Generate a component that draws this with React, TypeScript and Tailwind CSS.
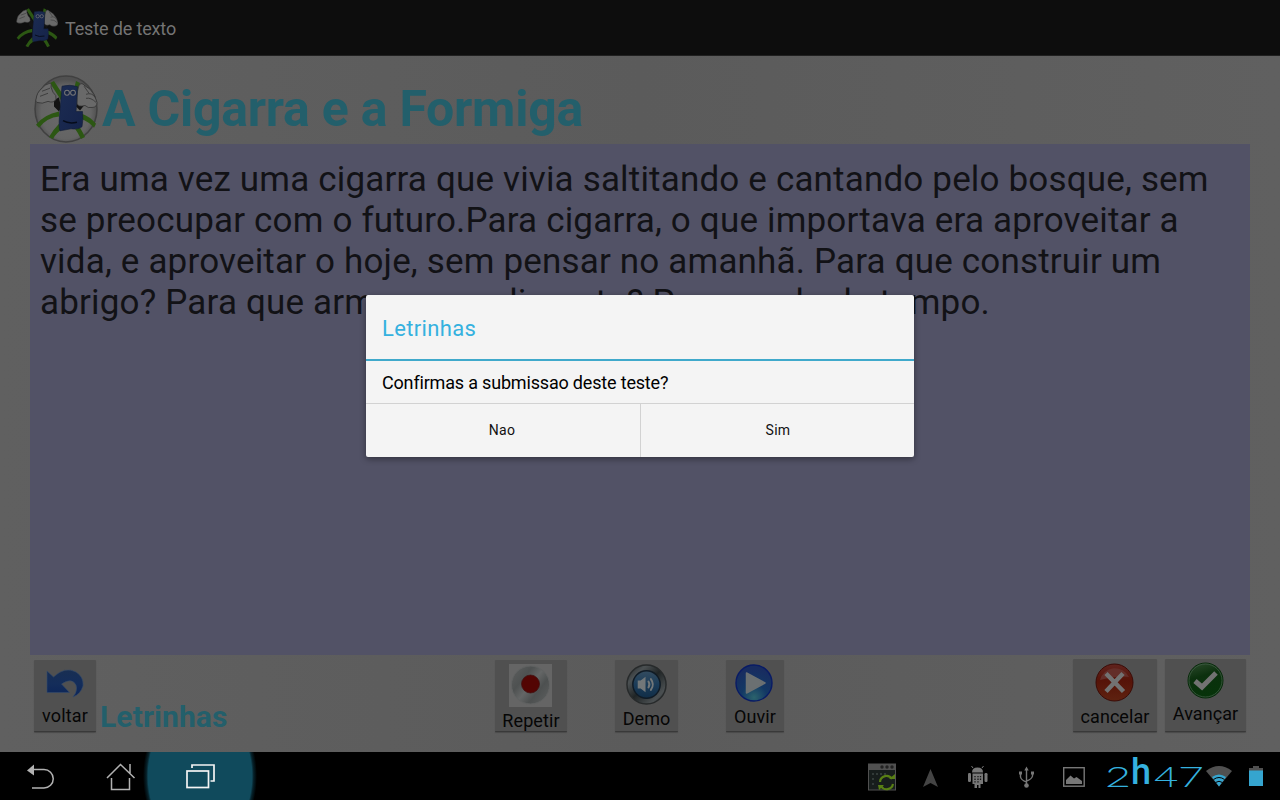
import React from "react";

const lines = [
  "Era uma vez uma cigarra que vivia saltitando e cantando pelo bosque, sem",
  "se preocupar com o futuro.Para cigarra, o que importava era aproveitar a",
  "vida, e aproveitar o hoje, sem pensar no amanhã. Para que construir um",
  "abrigo? Para que armazenar alimento? Pura perda de tempo.",
];

function Mascot({ className, disc }: { className: string; disc?: boolean }) {
  return (
    <svg viewBox={disc ? "0 0 64 67" : "1 4 62 60"} className={className} preserveAspectRatio="none">
      <defs>
        <radialGradient id="disc" cx="50%" cy="55%" r="50%">
          <stop offset="0" stopColor="#6a6a6a" />
          <stop offset="0.8" stopColor="#646464" />
          <stop offset="1" stopColor="#505050" />
        </radialGradient>
        <linearGradient id="body" x1="0" y1="0" x2="1" y2="1">
          <stop offset="0" stopColor="#1c2c52" />
          <stop offset="1" stopColor="#15234a" />
        </linearGradient>
      </defs>
      {disc && <ellipse cx="32" cy="33.5" rx="31" ry="32.5" fill="url(#disc)" stroke="#404040" strokeWidth="1.5" />}
      <g fill="#2c5713">
        <path d="M16 8 L20 6 L30 21 L27 25 Z" />
        <path d="M42 6 L46 8 L42 24 L38 22 Z" />
        <path d="M25 36 Q10 39 2 49 L5 52 Q13 42 25 41 Z" />
        <path d="M25 48 Q19 54 15 61 L19 63 Q22 57 29 53 Z" />
        <path d="M47 38 Q56 41 62 48 L60 52 Q55 46 47 43 Z" />
        <path d="M41 53 L46 52 Q49 57 51 61 L47 63 Q44 57 41 53 Z" />
      </g>
      <path d="M20 25 L25 22 L27 32 L25 36 L20 31 Z M42 31 L44 23 L50 30 L46 35 Z" fill="#131313" />
      <g fill="#696969" stroke="#333" strokeWidth="0.8">
        <path d="M2 24 Q3 17 7 14 Q11 9 16 8 Q18 9 17 12 L19 17 Q23 20 22 24 Q20 28 14 26 Q8 29 3 27 Q1 26 2 24 Z" />
        <path d="M43 22 Q43 16 45 10 Q48 7 50 10 L56 14 Q61 19 63 27 Q63 32 58 32 Q54 33 51 30 Q44 32 43 28 Z" />
        <path d="M6 21 L14 18 M8 16 L16 13 M50 11 L55 18 M52 19 Q58 17 61 22 M52 23 Q57 22 62 27" fill="none" />
      </g>
      <path d="M28 11 Q36 9 43.500 11.500 L42.500 30 L42 36 L48.500 36 Q49.500 44 48 51 Q44 54 37 53 L26 55 Q24.500 52 25.500 40 Z" fill="url(#body)" stroke="#111c36" strokeWidth="0.6" />
      <g fill="#172545" stroke="#777" strokeWidth="1">
        <circle cx="33" cy="17.500" r="2.400" />
        <circle cx="39" cy="17.500" r="2.400" />
      </g>
      <path d="M29 45 Q35 48.500 43 46.500" fill="none" stroke="#060c1a" strokeWidth="1.400" />
    </svg>
  );
}

function ActionButton({ className, label, labelClass, children }: { className: string; label: string; labelClass: string; children: React.ReactNode }) {
  return (
    <button className={`flex shrink-0 flex-col items-center overflow-hidden rounded-[1px] border-b border-[#393939] bg-[#505050] shadow-[0_1px_1px_#4a4a4a] ${className}`}>
      {children}
      <span className={`block whitespace-nowrap text-[18px] leading-[21px] text-[#060606] ${labelClass}`}>{label}</span>
    </button>
  );
}

export default function App() {
  return (
    <div className="relative flex h-[800px] w-[1280px] flex-col overflow-hidden bg-[#5d5d5d] font-[Roboto,sans-serif]">
      <header className="flex h-14 shrink-0 items-center border-b border-[#202020] bg-[#0d0d0d] pl-4 shadow-[0_1px_2px_#3c3c3c]">
        <Mascot className="h-[41px] w-[42px]" />
        <span className="ml-[7px] mt-[2px] whitespace-nowrap text-[18px] leading-6 tracking-[-0.15px] text-[#747474]">Teste de texto</span>
      </header>

      <main className="flex h-[696px] flex-col bg-gradient-to-r from-[#606060] via-[#5b5b5b] to-[#606060] px-[30px]">
        <div className="flex h-[88px] shrink-0 items-start pl-1 pt-[19px]">
          <Mascot className="h-[68px] w-[64px] shrink-0" disc />
          <h1 className="ml-[4px] mt-[5px] whitespace-nowrap text-[50px] font-bold leading-[59px] tracking-[-0.25px] text-[#235f6b]">A Cigarra e a Formiga</h1>
        </div>
        <section className="h-[511px] shrink-0 bg-[#525266] px-[10px] pt-[15px] text-[35px] leading-[41px] tracking-[0.17px] text-[#121216]">
          {lines.map((text) => (
            <p key={text} className="whitespace-nowrap">{text}</p>
          ))}
        </section>
        <div className="flex items-start pl-1 pt-[5px]">
          <ActionButton className="h-[72px] w-[62px]" label="voltar" labelClass="mt-[6px] tracking-[0.2px]">
            <svg viewBox="0 0 38 30" className="mr-px mt-[9px] h-[30px] w-[38px] shrink-0">
              <defs>
                <linearGradient id="undo" x1="0" y1="0" x2="0" y2="1">
                  <stop offset="0" stopColor="#182e52" />
                  <stop offset="0.5" stopColor="#142d5a" />
                  <stop offset="1" stopColor="#0c2458" />
                </linearGradient>
              </defs>
              <path d="M1 2 L7.500 8 Q19 -3 30 3 Q38 8 37 17 Q34.500 25 27 28 Q32 22 30 16 Q26 8 15.500 15 L23.500 23.500 L1 23.500 Z" fill="url(#undo)" stroke="#33496b" strokeWidth="0.600" />
            </svg>
          </ActionButton>
          <span className="ml-1 mt-[39px] w-[395px] whitespace-nowrap text-[30px] font-bold leading-[36px] tracking-[0.1px] text-[#235f6b]">Letrinhas</span>
          <ActionButton className="h-[72px] w-[72px]" label="Repetir" labelClass="mt-[3px] tracking-[0.1px]">
            <svg viewBox="0 0 43 43" className="mr-px mt-1 h-[43px] w-[43px] shrink-0">
              <defs>
                <linearGradient id="rec" x1="0" y1="0.1" x2="1" y2="0.9">
                  <stop offset="0" stopColor="#5b5d5d" />
                  <stop offset="0.3" stopColor="#4e5151" />
                  <stop offset="0.5" stopColor="#646666" />
                  <stop offset="0.7" stopColor="#4d5050" />
                  <stop offset="1" stopColor="#5c5e5e" />
                </linearGradient>
              </defs>
              <rect width="43" height="43" fill="#656565" />
              <circle cx="21.5" cy="21" r="19" fill="url(#rec)" stroke="#606262" />
              <circle cx="21.5" cy="20" r="9" fill="#530503" stroke="#3f1010" strokeWidth="0.7" />
            </svg>
          </ActionButton>
          <ActionButton className="ml-12 h-[72px] w-[63px]" label="Demo" labelClass="mt-[3px] tracking-[0px]">
            <svg viewBox="0 0 42 42" className="mt-1 h-[41px] w-[41px] shrink-0">
              <defs>
                <linearGradient id="ring" x1="0" y1="0" x2="1" y2="1">
                  <stop offset="0" stopColor="#1e2223" />
                  <stop offset="0.25" stopColor="#4b5052" />
                  <stop offset="0.5" stopColor="#202526" />
                  <stop offset="0.8" stopColor="#4b5052" />
                  <stop offset="1" stopColor="#24292b" />
                </linearGradient>
                <linearGradient id="spk" x1="0" y1="0" x2="0" y2="1">
                  <stop offset="0" stopColor="#344c5f" />
                  <stop offset="0.5" stopColor="#1b3c59" />
                  <stop offset="1" stopColor="#102d46" />
                </linearGradient>
              </defs>
              <circle cx="21" cy="21" r="20" fill="url(#ring)" stroke="#272a2b" strokeWidth="1.5" />
              <circle cx="21" cy="21" r="14" fill="url(#spk)" stroke="#101b25" strokeWidth="1.5" />
              <path d="M12 17 H15 L20 13 V29 L15 25 H12 Z" fill="#727779" />
              <path d="M23 18 Q25 21 23 24 M25.5 15.5 Q29.5 21 25.5 26.5" fill="none" stroke="#727779" strokeWidth="2" strokeLinecap="round" />
            </svg>
          </ActionButton>
          <ActionButton className="ml-12 h-[72px] w-[58px]" label="Ouvir" labelClass="mt-[4px] tracking-[0.1px]">
            <svg viewBox="0 0 38 38" className="mr-[2px] mt-1 h-[38px] w-[38px] shrink-0">
              <defs>
                <radialGradient id="play" cx="50%" cy="90%" r="80%">
                  <stop offset="0" stopColor="#2b636c" />
                  <stop offset="0.45" stopColor="#133864" />
                  <stop offset="1" stopColor="#182c60" />
                </radialGradient>
              </defs>
              <circle cx="19" cy="19" r="18" fill="url(#play)" stroke="#091b65" strokeWidth="1.4" />
              <path d="M11.5 9 L30 19 L11.5 29 Z" fill="#6b7072" stroke="#6b7072" strokeWidth="1.5" strokeLinejoin="round" />
            </svg>
          </ActionButton>
          <ActionButton className="-mt-px ml-[289px] h-[73px] w-[84px]" label="cancelar" labelClass="mt-[4px] tracking-[0.05px]">
            <svg viewBox="0 0 39 39" className="mr-px mt-1 h-[39px] w-[39px] shrink-0">
              <defs>
                <linearGradient id="no" x1="0" y1="0" x2="0" y2="1">
                  <stop offset="0" stopColor="#60231e" />
                  <stop offset="0.45" stopColor="#561308" />
                  <stop offset="1" stopColor="#5e2210" />
                </linearGradient>
              </defs>
              <circle cx="19.5" cy="19.5" r="18.5" fill="url(#no)" stroke="#3b0b06" />
              <path d="M5 17 A15.5 15.5 0 0 1 34 14 Q24 12 5 17 Z" fill="#632e29" />
              <path d="M11 10.500 L28.500 28.500 M28 10.500 L11 28.500" stroke="#727272" strokeWidth="4.500" />
            </svg>
          </ActionButton>
          <ActionButton className="-mt-px ml-2 h-[73px] w-[81px]" label="Avançar" labelClass="mt-[4px] tracking-[0.05px]">
            <svg viewBox="0 0 37 37" className="mt-[3px] h-[37px] w-[37px] shrink-0">
              <defs>
                <linearGradient id="yes" x1="0" y1="0" x2="0.3" y2="1">
                  <stop offset="0" stopColor="#2e4c2e" />
                  <stop offset="0.45" stopColor="#0c300e" />
                  <stop offset="1" stopColor="#07330a" />
                </linearGradient>
              </defs>
              <circle cx="18.500" cy="18.500" r="17.500" fill="url(#yes)" stroke="#072a0a" />
              <circle cx="18.500" cy="18.500" r="16.500" fill="none" stroke="#45604a" strokeWidth="0.700" />
              <path d="M8 19 L15 25 L29 11" fill="none" stroke="#727272" strokeWidth="5" />
            </svg>
          </ActionButton>
        </div>
      </main>

      <nav className="flex h-12 shrink-0 items-center overflow-hidden bg-black">
        <svg viewBox="0 0 260 48" className="h-12 w-[260px] shrink-0" fill="none">
          <defs>
            <radialGradient id="glow" cx="50%" cy="50%" r="50%">
              <stop offset="0.91" stopColor="#104a5c" />
              <stop offset="0.94" stopColor="#06222b" />
              <stop offset="1" stopColor="#000" />
            </radialGradient>
          </defs>
          <ellipse cx="200" cy="24" rx="57" ry="78" fill="url(#glow)" />
          <g stroke="#b2b2b2" strokeWidth="1.500">
            <path d="M32 17.500 H44 A9.200 9.200 0 0 1 44 36 H32" />
            <path d="M27 18.500 L34 12.500 V23.500 Z" fill="#b2b2b2" stroke="none" />
            <path d="M107 26 L120.500 12.500 L134.500 26 M130 21 V12 M111.500 26 V37.500 H129.500 V26" />
          </g>
          <g stroke="#f4f4f4" strokeWidth="1.700">
            <rect x="187" y="19" width="21.500" height="16.500" />
            <path d="M192 16 V13 H214 V29 H210.500" />
          </g>
        </svg>
        <svg viewBox="0 0 240 48" className="ml-[600px] h-12 w-[240px] shrink-0" fill="none">
          <g transform="translate(-860 -752)">
            <rect x="868.500" y="764" width="27" height="26" fill="#171d1c" stroke="#505050" strokeWidth="1" />
            <rect x="868" y="764" width="28" height="6" fill="#505050" />
            <g fill="#222"><circle cx="882" cy="767" r="1.700" /><circle cx="887" cy="767" r="1.700" /><circle cx="892" cy="767" r="1.700" /></g>
            <g stroke="#3c4442" strokeWidth="1.500"><path d="M872 774 h2 M872 779 h2 M872 784 h2 M876 774 h10" strokeDasharray="2 2" /></g>
            <g stroke="#587f14" strokeWidth="2.200"><path d="M880 782 A6.500 6.500 0 0 1 892 779 M893 784 A6.500 6.500 0 0 1 881 786" /></g>
            <path d="M889 779 h6 v-5 Z M878 785 h6 l-5 5 Z" fill="#587f14" />
            <path d="M930.500 769 L938 787 L930.500 783 L923 787 Z" fill="#444" />
            <g fill="#777">
              <path d="M972 772.500 Q972 767.500 977.500 767.500 Q983 767.500 983 772.500 Z" />
              <path d="M972.500 773.500 H983 V784 H980.500 V788 H978.500 V785 H977 V788 H974.500 V784 H972.500 Z" />
              <rect x="968" y="773" width="3" height="9" rx="1.200" />
              <rect x="984.500" y="773" width="3" height="9" rx="1.200" />
            </g>
            <path d="M973 768 l-1.500 -2 M982 768 l1.500 -2" stroke="#777" />
            <path d="M975 776 v7 M978 776 v7 M980.500 776 v5" stroke="#161616" strokeWidth="1.300" strokeDasharray="1.300 1.300" />
            <g stroke="#777" strokeWidth="1.400">
              <path d="M1026.500 769 V785 M1020.500 774 V777 Q1021 780 1026.500 782 M1032.500 773 V776 Q1032 779 1026.500 781" />
            </g>
            <path d="M1026.500 766.500 l2.200 4 h-4.400 Z M1019 771.500 h3 v3 h-3 Z M1031 771.500 h3 v3 h-3 Z" fill="#777" />
            <circle cx="1026.500" cy="785.500" r="2.300" fill="#777" />
            <rect x="1063.700" y="767.700" width="20.500" height="18.500" stroke="#777" strokeWidth="1.400" />
            <path d="M1066 784 V780 L1070.500 775.500 L1074 778.500 L1076.500 777 L1082 781 V784 Z" fill="#777" />
          </g>
        </svg>
        <div className="ml-[5px] flex h-12 w-[101px] shrink-0 items-start font-[Lato,sans-serif] text-[28px] font-light leading-[48px] text-[#35b1df]">
          <span className="w-[26px] shrink-0 origin-left scale-x-[1.6]">2</span>
          <span className="-mt-[4px] w-[23px] shrink-0 origin-left font-[Roboto,sans-serif] text-[36px] font-medium">h</span>
          <span className="w-[24px] shrink-0 origin-left scale-x-[1.5]">4</span>
          <span className="w-[24px] shrink-0 origin-left scale-x-[1.6]">7</span>
        </div>
        <svg viewBox="0 0 74 48" className="h-12 w-[74px] shrink-0">
          <path d="M0 19 Q13 9 26 19 L13 34.500 Z" fill="#505050" />
          <path d="M6 25 Q13 20 20 25 L13 34.500 Z" fill="#35a5cf" />
          <path d="M7.500 27.500 Q13 23.500 18.500 27.500 M9.500 30.500 Q13 28 16.500 30.500" fill="none" stroke="#000" strokeWidth="1" />
          <rect x="47" y="14" width="6" height="3" fill="#505050" />
          <rect x="43" y="16" width="14" height="4" fill="#505050" />
          <rect x="43" y="18.500" width="14" height="15.500" fill="#35a5cf" />
        </svg>
      </nav>

      <div role="dialog" className="absolute left-[366px] top-[295px] flex h-[162px] w-[548px] flex-col rounded-[2px] bg-[#f4f4f4] shadow-[0_2px_6px_rgba(0,0,0,0.4)]">
        <h2 className="h-[66px] shrink-0 whitespace-nowrap border-b-2 border-[#3fa9cb] pl-4 text-[22px] leading-[67px] tracking-[0.35px] text-[#35b1df]">Letrinhas</h2>
        <p className="h-[42px] shrink-0 whitespace-nowrap pl-4 text-[18px] leading-[43px] tracking-[-0.18px] text-black">Confirmas a submissao deste teste?</p>
        <div className="flex flex-1 border-t border-[#d2d2d2] text-[14px] text-[#111]">
          <button className="w-[275px] border-r border-[#d2d2d2] pr-[2px] tracking-[0.3px]">Nao</button>
          <button className="flex-1 pl-px tracking-[0.3px]">Sim</button>
        </div>
      </div>
    </div>
  );
}
